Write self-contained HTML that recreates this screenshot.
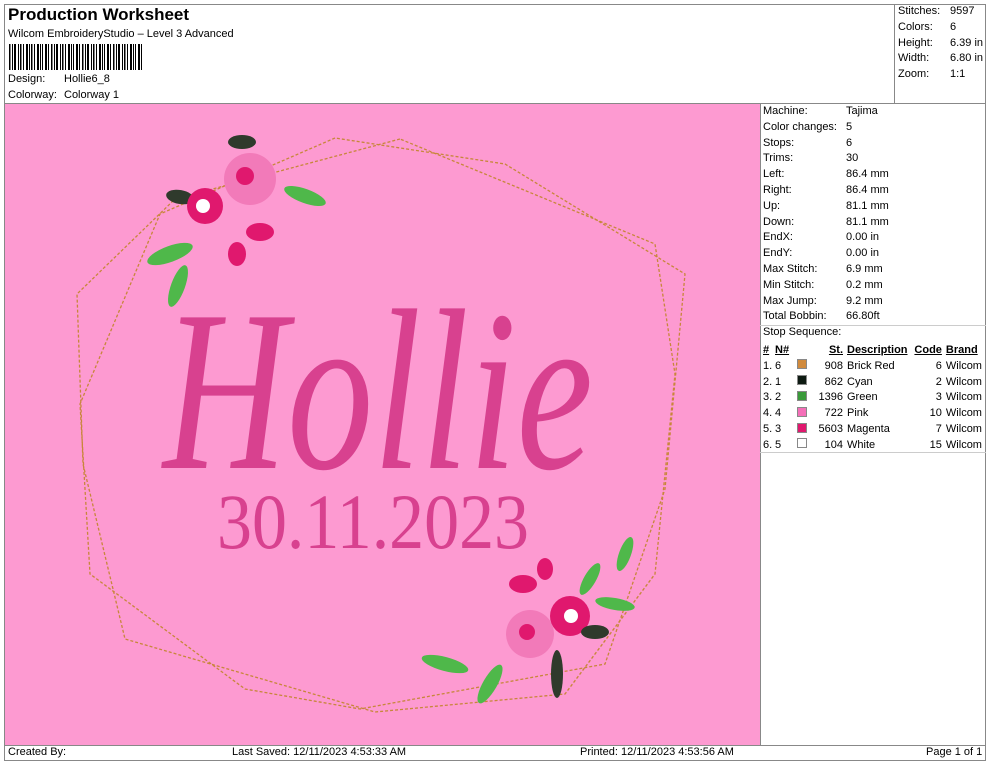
<!DOCTYPE html>
<html><head><meta charset="utf-8"><style>
*{margin:0;padding:0;box-sizing:border-box}
body{width:990px;height:762px;background:#fff;font-family:"Liberation Sans",Arial,sans-serif;font-size:11px;color:#000;position:relative;overflow:hidden}
.a{position:absolute}
.line{position:absolute;background:#888}
table{border-collapse:collapse;font-size:11px}
.kv div{height:15.8px;line-height:15.8px;white-space:nowrap}
.kv span{display:inline-block}
</style></head><body>
<div class="line" style="left:4px;top:4px;width:982px;height:1px"></div>
<div class="line" style="left:4px;top:4px;width:1px;height:757px"></div>
<div class="line" style="left:985px;top:4px;width:1px;height:757px"></div>
<div class="line" style="left:4px;top:760px;width:982px;height:1px"></div>
<div class="line" style="left:4px;top:103px;width:982px;height:1px"></div>
<div class="line" style="left:894px;top:4px;width:1px;height:100px"></div>
<div class="line" style="left:4px;top:745px;width:982px;height:1px"></div>
<div class="line" style="left:760px;top:104px;width:1px;height:641px"></div>

<div class="a" style="left:8px;top:5px;font-size:17px;font-weight:bold">Production Worksheet</div>
<div class="a" style="left:8px;top:28px">Wilcom EmbroideryStudio – Level 3 Advanced</div>
<svg class="a" style="left:9px;top:44px" width="135" height="26">
<g fill="#000">
<rect x="0" y="0" width="1.5" height="26"/><rect x="3" y="0" width="1" height="26"/><rect x="5" y="0" width="2" height="26"/><rect x="9" y="0" width="1" height="26"/><rect x="11" y="0" width="1.5" height="26"/><rect x="14" y="0" width="1" height="26"/><rect x="17" y="0" width="2" height="26"/><rect x="20" y="0" width="1" height="26"/><rect x="22" y="0" width="1.5" height="26"/><rect x="25" y="0" width="1" height="26"/><rect x="28" y="0" width="2" height="26"/><rect x="31" y="0" width="1" height="26"/><rect x="33" y="0" width="1" height="26"/><rect x="36" y="0" width="2" height="26"/><rect x="39" y="0" width="1" height="26"/><rect x="42" y="0" width="1.5" height="26"/><rect x="45" y="0" width="1" height="26"/><rect x="47" y="0" width="2" height="26"/><rect x="51" y="0" width="1" height="26"/><rect x="53" y="0" width="1.5" height="26"/><rect x="56" y="0" width="1" height="26"/><rect x="59" y="0" width="2" height="26"/><rect x="62" y="0" width="1" height="26"/><rect x="64" y="0" width="1" height="26"/><rect x="67" y="0" width="2" height="26"/><rect x="70" y="0" width="1" height="26"/><rect x="73" y="0" width="1.5" height="26"/><rect x="76" y="0" width="1" height="26"/><rect x="78" y="0" width="2" height="26"/><rect x="82" y="0" width="1" height="26"/><rect x="84" y="0" width="1.5" height="26"/><rect x="87" y="0" width="1" height="26"/><rect x="90" y="0" width="2" height="26"/><rect x="93" y="0" width="1" height="26"/><rect x="95" y="0" width="1" height="26"/><rect x="98" y="0" width="2" height="26"/><rect x="101" y="0" width="1" height="26"/><rect x="104" y="0" width="1.5" height="26"/><rect x="107" y="0" width="1" height="26"/><rect x="109" y="0" width="2" height="26"/><rect x="113" y="0" width="1" height="26"/><rect x="115" y="0" width="1.5" height="26"/><rect x="118" y="0" width="1" height="26"/><rect x="121" y="0" width="2" height="26"/><rect x="124" y="0" width="1" height="26"/><rect x="126" y="0" width="1" height="26"/><rect x="129" y="0" width="2" height="26"/><rect x="132" y="0" width="1" height="26"/>
</g></svg>
<div class="a" style="left:8px;top:73px">Design:</div><div class="a" style="left:64px;top:73px">Hollie6_8</div>
<div class="a" style="left:8px;top:89px">Colorway:</div><div class="a" style="left:64px;top:89px">Colorway 1</div>

<div class="a kv" style="left:898px;top:4px">
<div><span style="width:52px">Stitches:</span>9597</div>
<div><span style="width:52px">Colors:</span>6</div>
<div><span style="width:52px">Height:</span>6.39 in</div>
<div><span style="width:52px">Width:</span>6.80 in</div>
<div><span style="width:52px">Zoom:</span>1:1</div>
</div>

<div class="a kv" style="left:763px;top:104px">
<div><span style="width:83px">Machine:</span>Tajima</div>
<div><span style="width:83px">Color changes:</span>5</div>
<div><span style="width:83px">Stops:</span>6</div>
<div><span style="width:83px">Trims:</span>30</div>
<div><span style="width:83px">Left:</span>86.4 mm</div>
<div><span style="width:83px">Right:</span>86.4 mm</div>
<div><span style="width:83px">Up:</span>81.1 mm</div>
<div><span style="width:83px">Down:</span>81.1 mm</div>
<div><span style="width:83px">EndX:</span>0.00 in</div>
<div><span style="width:83px">EndY:</span>0.00 in</div>
<div><span style="width:83px">Max Stitch:</span>6.9 mm</div>
<div><span style="width:83px">Min Stitch:</span>0.2 mm</div>
<div><span style="width:83px">Max Jump:</span>9.2 mm</div>
<div><span style="width:83px">Total Bobbin:</span>66.80ft</div>
</div>
<div class="line" style="left:760px;top:325px;width:226px;height:1px;background:#ccc"></div>
<div class="a" style="left:763px;top:326px">Stop Sequence:</div>
<div class="a" style="left:761px;top:342px;width:224px">
<table style="width:224px">
<tr style="height:16px;font-weight:bold;text-decoration:underline"><td style="width:14px;padding-left:2px">#</td><td style="width:22px">N#</td><td style="width:16px"></td><td style="text-align:right;width:30px">St.</td><td style="padding-left:4px">Description</td><td style="text-align:right">Code</td><td style="padding-left:4px">Brand</td></tr>
<tr style="height:15.8px"><td style="padding-left:2px">1.</td><td>6</td><td><i style="display:inline-block;width:10px;height:10px;background:#d18a3c;border:1px solid #888"></i></td><td style="text-align:right">908</td><td style="padding-left:4px">Brick Red</td><td style="text-align:right">6</td><td style="padding-left:4px">Wilcom</td></tr>
<tr style="height:15.8px"><td style="padding-left:2px">2.</td><td>1</td><td><i style="display:inline-block;width:10px;height:10px;background:#0e1a12;border:1px solid #888"></i></td><td style="text-align:right">862</td><td style="padding-left:4px">Cyan</td><td style="text-align:right">2</td><td style="padding-left:4px">Wilcom</td></tr>
<tr style="height:15.8px"><td style="padding-left:2px">3.</td><td>2</td><td><i style="display:inline-block;width:10px;height:10px;background:#3a9a3a;border:1px solid #888"></i></td><td style="text-align:right">1396</td><td style="padding-left:4px">Green</td><td style="text-align:right">3</td><td style="padding-left:4px">Wilcom</td></tr>
<tr style="height:15.8px"><td style="padding-left:2px">4.</td><td>4</td><td><i style="display:inline-block;width:10px;height:10px;background:#f46fb8;border:1px solid #888"></i></td><td style="text-align:right">722</td><td style="padding-left:4px">Pink</td><td style="text-align:right">10</td><td style="padding-left:4px">Wilcom</td></tr>
<tr style="height:15.8px"><td style="padding-left:2px">5.</td><td>3</td><td><i style="display:inline-block;width:10px;height:10px;background:#e0186e;border:1px solid #888"></i></td><td style="text-align:right">5603</td><td style="padding-left:4px">Magenta</td><td style="text-align:right">7</td><td style="padding-left:4px">Wilcom</td></tr>
<tr style="height:15.8px"><td style="padding-left:2px">6.</td><td>5</td><td><i style="display:inline-block;width:10px;height:10px;background:#fff;border:1px solid #888"></i></td><td style="text-align:right">104</td><td style="padding-left:4px">White</td><td style="text-align:right">15</td><td style="padding-left:4px">Wilcom</td></tr>
</table></div>
<div class="line" style="left:760px;top:452px;width:226px;height:1px;background:#ccc"></div>

<svg class="a" style="left:5px;top:104px" width="755" height="641" viewBox="0 0 755 641">
<rect width="755" height="641" fill="#fd9ad1"/>
<g fill="none" stroke="#c8863a" stroke-width="1.3" stroke-dasharray="3,2">
<polygon points="330,34 155,110 75,300 85,470 240,585 355,605 600,560 660,385 680,170 500,60"/>
<polygon points="395,35 170,95 72,190 78,360 120,535 370,608 560,590 650,470 670,270 650,140"/>
</g>
<text x="158" y="364" font-family="Liberation Serif,serif" font-style="italic" font-size="230" fill="#d8418f" textLength="430" lengthAdjust="spacingAndGlyphs">Hollie</text>
<text x="212" y="444" font-family="Liberation Serif,serif" font-size="78" fill="#d8418f" textLength="312" lengthAdjust="spacingAndGlyphs">30.11.2023</text>
<g>
<ellipse cx="165" cy="150" rx="24" ry="8" fill="#4fb84a" transform="rotate(-20 165 150)"/>
<ellipse cx="173" cy="182" rx="22" ry="7" fill="#4fb84a" transform="rotate(-70 173 182)"/>
<ellipse cx="300" cy="92" rx="22" ry="7" fill="#4fb84a" transform="rotate(20 300 92)"/>
<ellipse cx="175" cy="93" rx="14" ry="7" fill="#2f3a2c" transform="rotate(10 175 93)"/>
<ellipse cx="237" cy="38" rx="14" ry="7" fill="#2f3a2c"/>
<circle cx="245" cy="75" r="26" fill="#f27ab9"/>
<circle cx="240" cy="72" r="9" fill="#e0186e"/>
<circle cx="200" cy="102" r="18" fill="#e0186e"/>
<circle cx="198" cy="102" r="7" fill="#fff"/>
<ellipse cx="255" cy="128" rx="14" ry="9" fill="#e0186e"/>
<ellipse cx="232" cy="150" rx="9" ry="12" fill="#e0186e"/>
<ellipse cx="440" cy="560" rx="24" ry="7" fill="#4fb84a" transform="rotate(15 440 560)"/>
<ellipse cx="485" cy="580" rx="22" ry="7" fill="#4fb84a" transform="rotate(-60 485 580)"/>
<ellipse cx="620" cy="450" rx="18" ry="6" fill="#4fb84a" transform="rotate(-70 620 450)"/>
<ellipse cx="610" cy="500" rx="20" ry="6" fill="#4fb84a" transform="rotate(10 610 500)"/>
<ellipse cx="585" cy="475" rx="18" ry="6" fill="#4fb84a" transform="rotate(-60 585 475)"/>
<ellipse cx="552" cy="570" rx="6" ry="24" fill="#2f3a2c"/>
<circle cx="525" cy="530" r="24" fill="#f27ab9"/>
<circle cx="522" cy="528" r="8" fill="#e0186e"/>
<circle cx="565" cy="512" r="20" fill="#e0186e"/>
<circle cx="566" cy="512" r="7" fill="#fff"/>
<ellipse cx="590" cy="528" rx="14" ry="7" fill="#2f3a2c"/>
<ellipse cx="518" cy="480" rx="14" ry="9" fill="#e0186e"/>
<ellipse cx="540" cy="465" rx="8" ry="11" fill="#e0186e"/>
</g>
</svg>

<div class="a" style="left:8px;top:746px">Created By:</div>
<div class="a" style="left:232px;top:746px">Last Saved: 12/11/2023 4:53:33 AM</div>
<div class="a" style="left:580px;top:746px">Printed: 12/11/2023 4:53:56 AM</div>
<div class="a" style="left:926px;top:746px">Page 1 of 1</div>
</body></html>
